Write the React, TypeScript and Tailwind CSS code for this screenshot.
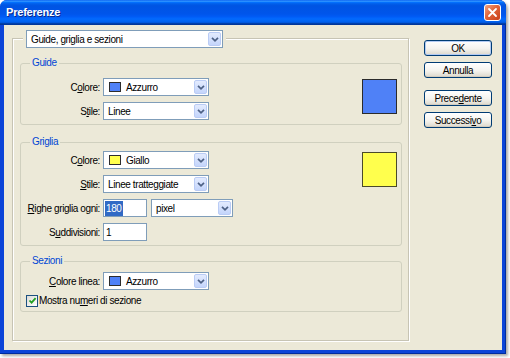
import React from "react";

type SelProps = { w: string; text: string; swatch?: string };

function Chevron() {
  return (
    <svg width="8" height="5" viewBox="0 0 8 5">
      <path d="M1 0.8 L4 3.8 L7 0.8" fill="none" stroke="#4D6185" strokeWidth="1.7" />
    </svg>
  );
}

function Select({ w, text, swatch }: SelProps) {
  return (
    <div className={`flex h-[18px] ${w} shrink-0 items-stretch border border-[#7F9DB9] bg-white`}>
      <div className="flex flex-1 items-center gap-[5px] pl-[4px]">
        {swatch ? <span className={`ml-[1px] h-[10px] w-[12px] border border-[#2d2d2d] ${swatch}`} /> : null}
        <span>{text}</span>
      </div>
      <div className="m-[1px] flex w-[13px] items-center justify-center rounded-[2px] border border-[#BACCF5] bg-[linear-gradient(to_bottom,#e3ebfe,#c4d5fb)]">
        <Chevron />
      </div>
    </div>
  );
}

function Btn({ children, def }: { children: React.ReactNode; def?: boolean }) {
  return (
    <div
      className={`flex h-[16px] w-[68px] items-center justify-center rounded-[3px] border border-[#003C74] bg-[linear-gradient(to_bottom,#ffffff,#f4f3ee_55%,#dcd8cc)] ${
        def ? "shadow-[inset_0_0_0_1px_#b3cbf3]" : "shadow-[inset_0_-1px_0_#d2ccbf]"
      }`}
    >
      {children}
    </div>
  );
}

function Group({ title, className, children }: { title: string; className: string; children: React.ReactNode }) {
  return (
    <div className={`ml-[7px] flex w-[382px] flex-col rounded-[3px] border border-[#D0D0BF] ${className}`}>
      <div className="-mt-[7px] ml-[9px] h-[12px] self-start bg-[#ECE9D8] px-[2px] leading-[12px] text-[#0046D5]">
        {title}
      </div>
      {children}
    </div>
  );
}

function Row({ label, children }: { label: React.ReactNode; children: React.ReactNode }) {
  return (
    <div className="flex h-[18px] items-center gap-[3px]">
      <div className="w-[74px] whitespace-nowrap text-right">{label}</div>
      {children}
    </div>
  );
}

function Input({ children }: { children: React.ReactNode }) {
  return (
    <div className="flex h-[18px] w-[44px] shrink-0 items-center border border-[#7F9DB9] bg-white pl-[1px]">
      {children}
    </div>
  );
}

export default function App() {
  return (
    <div className="h-[358px] w-[510px] overflow-hidden bg-white font-['Liberation_Sans',Arial,sans-serif] text-[10px] tracking-[-0.4px] text-black">
      <div className="flex h-[354px] w-[506px] flex-col rounded-t-[7px] bg-[#0B44D8] shadow-[inset_0_-1px_0_#002c9e,inset_-1px_0_0_#002c9e,2px_2px_3px_rgba(0,0,0,0.35)]">
        <div className="flex h-[25px] items-center justify-between rounded-t-[7px] bg-[linear-gradient(180deg,#0058ee_0%,#3593ff_4%,#288eff_6%,#127dff_8%,#036ffc_10%,#0262ee_14%,#0057e5_20%,#0054e3_24%,#0055eb_56%,#005bf5_66%,#026afe_76%,#0062ef_86%,#0052d6_92%,#0040ab_94%,#003092_100%)] pl-[6px] pr-[5px]">
          <span className="text-[11px] font-bold tracking-[-0.2px] text-white [text-shadow:1px_1px_0_#0a2a8a]">
            Preferenze
          </span>
          <div className="flex h-[17px] w-[17px] items-center justify-center rounded-[3px] border border-white bg-[linear-gradient(to_bottom_right,#f0a283,#e0653a_45%,#c9401a)]">
            <svg width="11" height="11" viewBox="0 0 11 11">
              <path d="M2 2 L9 9 M9 2 L2 9" stroke="white" strokeWidth="1.8" strokeLinecap="round" />
            </svg>
          </div>
        </div>
        <div className="mx-[4px] mb-[4px] flex flex-1 bg-[#ECE9D8]">
          <div className="ml-[8px] mt-[13px] flex h-[303px] w-[397px] flex-col border border-[#C7C4B4] shadow-[inset_1px_1px_0_#fff,1px_1px_0_#fff]">
            <div className="-mt-[9px] ml-[10px] self-start bg-[#ECE9D8] px-[3px]">
              <Select w="w-[197px]" text="Guide, griglia e sezioni" />
            </div>

            <Group title="Guide" className="mt-[15px] pb-[4px]">
              <div className="mt-[9px] flex justify-between">
                <div className="flex flex-col gap-[6px] pl-[5px]">
                  <Row label={<>C<u>o</u>lore:</>}>
                    <Select w="w-[106px]" text="Azzurro" swatch="bg-[#4F81F7]" />
                  </Row>
                  <Row label={<>S<u>t</u>ile:</>}>
                    <Select w="w-[106px]" text="Linee" />
                  </Row>
                </div>
                <div className="mr-[4px] mt-[1px] h-[35px] w-[35px] border border-[#2b2b2b] bg-[#4F81F7]" />
              </div>
            </Group>

            <Group title="Griglia" className="mt-[17px] pb-[4px]">
              <div className="mt-[3px] flex justify-between">
                <div className="flex flex-col gap-[6px] pl-[5px]">
                  <Row label={<>C<u>o</u>lore:</>}>
                    <Select w="w-[106px]" text="Giallo" swatch="bg-[#FFFF4D]" />
                  </Row>
                  <Row label={<><u>S</u>tile:</>}>
                    <Select w="w-[106px]" text="Linee tratteggiate" />
                  </Row>
                  <Row label={<><u>R</u>ighe griglia ogni:</>}>
                    <Input>
                      <span className="bg-[#316AC5] px-[1px] text-white">180</span>
                    </Input>
                    <div className="ml-[1px]">
                      <Select w="w-[82px]" text="pixel" />
                    </div>
                  </Row>
                  <Row label={<>S<u>u</u>ddivisioni:</>}>
                    <Input>
                      <span className="pl-[1px]">1</span>
                    </Input>
                  </Row>
                </div>
                <div className="mr-[4px] mt-[1px] h-[35px] w-[35px] border border-[#4a4a2a] bg-[#FFFF4D]" />
              </div>
            </Group>

            <Group title="Sezioni" className="mt-[15px] pb-[4px]">
              <div className="mt-[5px] flex flex-col gap-[4px] pl-[5px]">
                <Row label={<><u>C</u>olore linea:</>}>
                  <Select w="w-[106px]" text="Azzurro" swatch="bg-[#4F81F7]" />
                </Row>
                <div className="flex h-[13px] items-center gap-[1px]">
                  <div className="flex h-[12px] w-[12px] items-center justify-center border border-[#1C5180] bg-[linear-gradient(to_bottom_right,#dcdcd7,#ffffff)]">
                    <svg width="9" height="9" viewBox="0 0 9 9">
                      <path d="M1.5 4.5 L3.6 6.7 L7.6 2.2" fill="none" stroke="#21A121" strokeWidth="1.8" />
                    </svg>
                  </div>
                  <span>
                    Mostra nu<u>m</u>eri di sezione
                  </span>
                </div>
              </div>
            </Group>
          </div>

          <div className="ml-[15px] mt-[15px] flex flex-col">
            <Btn def>OK</Btn>
            <div className="mt-[6px]">
              <Btn>Annulla</Btn>
            </div>
            <div className="mt-[12px]">
              <Btn>
                <span>
                  Prece<u>d</u>ente
                </span>
              </Btn>
            </div>
            <div className="mt-[6px]">
              <Btn>
                <span>
                  Successi<u>v</u>o
                </span>
              </Btn>
            </div>
          </div>
        </div>
      </div>
    </div>
  );
}
